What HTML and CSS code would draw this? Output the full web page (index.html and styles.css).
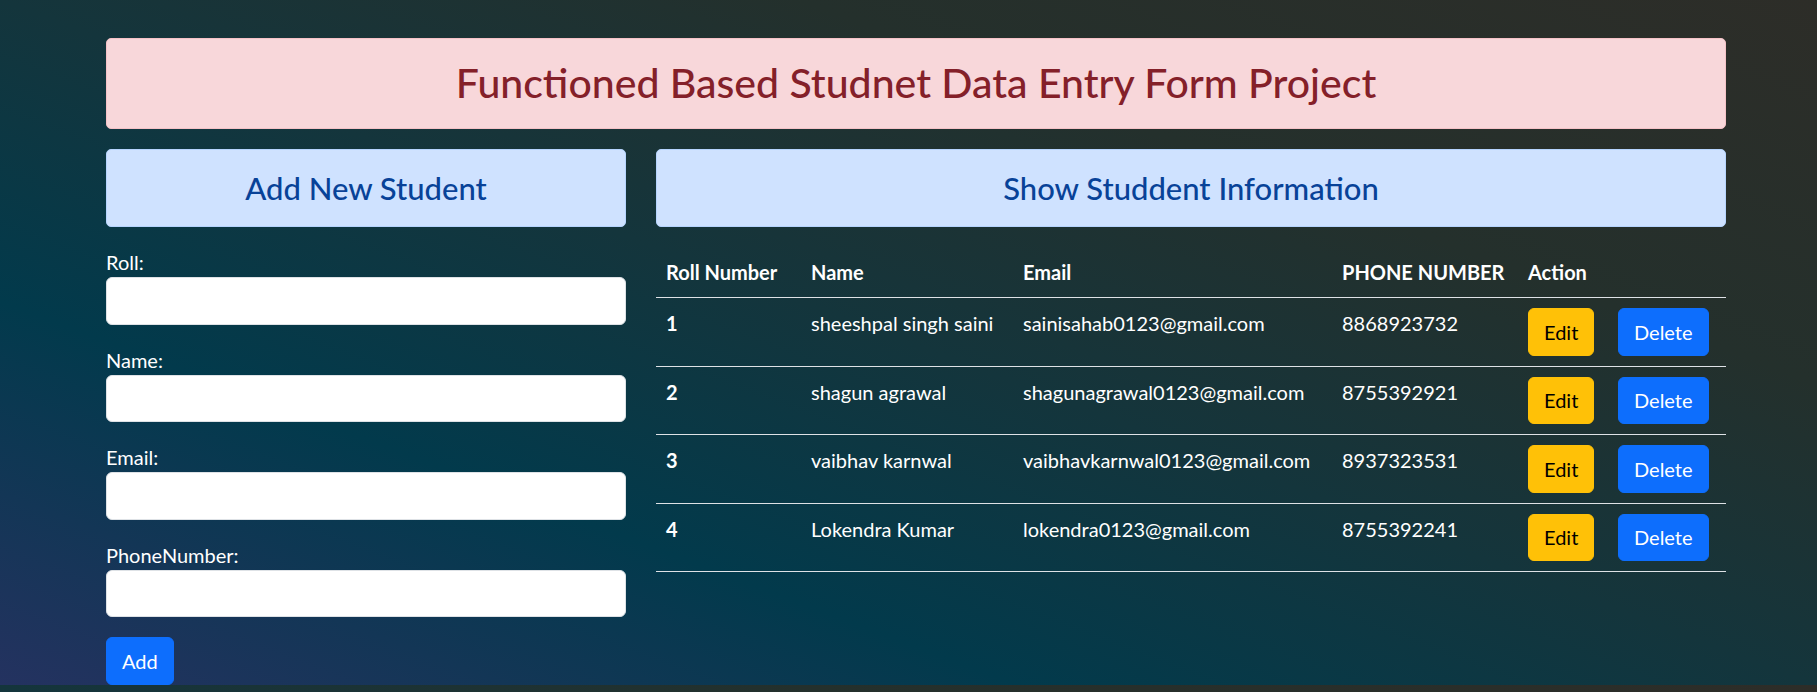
FILE: index.html
```html
<!DOCTYPE html>
<html lang="en">
<head>
<meta charset="utf-8">
<title>Student Data Entry</title>
<link rel="stylesheet" href="styles.css">
</head>
<body>
<div class="container">
  <div class="alert alert-danger title-box">
    <h2 class="title">Functioned Based Studnet Data Entry Form Project</h2>
  </div>
  <div class="row">
    <div class="col-form">
      <div class="alert alert-primary sub-box">
        <h4 class="sub-title">Add New Student</h4>
      </div>
      <form class="form">
        <div class="field">
          <label class="label" for="roll">Roll:</label>
          <input class="form-control" id="roll" type="text">
        </div>
        <div class="field">
          <label class="label" for="name">Name:</label>
          <input class="form-control" id="name" type="text">
        </div>
        <div class="field">
          <label class="label" for="email">Email:</label>
          <input class="form-control" id="email" type="email">
        </div>
        <div class="field">
          <label class="label" for="phone">PhoneNumber:</label>
          <input class="form-control" id="phone" type="text">
        </div>
        <button class="btn btn-primary" type="button">Add</button>
      </form>
    </div>
    <div class="col-table">
      <div class="alert alert-primary sub-box">
        <h4 class="sub-title">Show Studdent Information</h4>
      </div>
      <table class="table">
        <colgroup>
          <col class="c-roll">
          <col class="c-name">
          <col class="c-email">
          <col class="c-phone">
          <col class="c-edit">
          <col class="c-del">
        </colgroup>
        <thead>
          <tr>
            <th>Roll Number</th>
            <th>Name</th>
            <th>Email</th>
            <th>PHONE NUMBER</th>
            <th colspan="2">Action</th>
          </tr>
        </thead>
        <tbody>
          <tr>
            <th>1</th>
            <td>sheeshpal singh saini</td>
            <td>sainisahab0123@gmail.com</td>
            <td>8868923732</td>
            <td><button class="btn btn-warning" type="button">Edit</button></td>
            <td><button class="btn btn-primary" type="button">Delete</button></td>
          </tr>
          <tr>
            <th>2</th>
            <td>shagun agrawal</td>
            <td>shagunagrawal0123@gmail.com</td>
            <td>8755392921</td>
            <td><button class="btn btn-warning" type="button">Edit</button></td>
            <td><button class="btn btn-primary" type="button">Delete</button></td>
          </tr>
          <tr>
            <th>3</th>
            <td>vaibhav karnwal</td>
            <td>vaibhavkarnwal0123@gmail.com</td>
            <td>8937323531</td>
            <td><button class="btn btn-warning" type="button">Edit</button></td>
            <td><button class="btn btn-primary" type="button">Delete</button></td>
          </tr>
          <tr>
            <th>4</th>
            <td>Lokendra Kumar</td>
            <td>lokendra0123@gmail.com</td>
            <td>8755392241</td>
            <td><button class="btn btn-warning" type="button">Edit</button></td>
            <td><button class="btn btn-primary" type="button">Delete</button></td>
          </tr>
        </tbody>
      </table>
    </div>
  </div>
</div>
</body>
</html>
```
FILE: styles.css
```css
html {
  margin: 0;
}

body {
  margin: 0;
  font-family: Lato, "Open Sans", "Liberation Sans", sans-serif;
  font-size: 20px;
  line-height: 1.5;
  color: #ffffff;
  background: linear-gradient(to top right, #243260 0%, #023a4c 28%, #14353c 50%, #24302c 72%, #2d2d28 100%);
}

.container {
  width: 1620px;
  margin-left: 106px;
  padding-top: 38px;
}

.alert {
  border: 1px solid transparent;
  border-radius: 5px;
  padding: 20px;
  margin-bottom: 20px;
  text-align: center;
}

.alert-danger {
  background: #f8d7da;
  border-color: #f5c2c7;
  color: #842029;
}

.alert-primary {
  background: #cfe2ff;
  border-color: #b6d4fe;
  color: #084298;
}

.title-box {
  padding: 20.25px 20px;
}

.title {
  margin: 0;
  font-size: 41px;
  line-height: 48px;
  font-weight: 500;
}

.sub-box {
  padding: 20.25px 20px;
}

.sub-title {
  margin: 0;
  font-size: 31px;
  line-height: 36px;
  font-weight: 500;
}

.row {
  display: flex;
  gap: 30px;
  align-items: flex-start;
}

.col-form {
  width: 520px;
  flex: none;
}

.col-table {
  width: 1070px;
  flex: none;
}

.form {
  margin: 0;
}

.field {
  margin-bottom: 20px;
}

.label {
  display: block;
  height: 30px;
  line-height: 30px;
}

.form-control {
  display: block;
  box-sizing: border-box;
  width: 100%;
  height: 47.5px;
  margin: 0;
  padding: 7.5px 15px;
  font: inherit;
  border: 1px solid #dee2e6;
  border-radius: 6px;
  background: #ffffff;
  color: #212529;
}

.btn {
  display: inline-block;
  box-sizing: border-box;
  height: 47.5px;
  margin: 0;
  padding: 7.5px 15px;
  font-family: inherit;
  font-size: 20px;
  line-height: 30px;
  font-weight: 400;
  border: 1px solid transparent;
  border-radius: 6px;
  cursor: pointer;
  vertical-align: top;
}

.btn-primary {
  background: #0d6efd;
  border-color: #0d6efd;
  color: #ffffff;
}

.btn-warning {
  background: #ffc107;
  border-color: #ffc107;
  color: #000000;
}

.table {
  width: 100%;
  border-collapse: collapse;
  table-layout: fixed;
  margin: 0;
  color: #ffffff;
}

.c-roll { width: 145px; }
.c-name { width: 212px; }
.c-email { width: 319px; }
.c-phone { width: 186px; }
.c-edit { width: 90px; }
.c-del { width: 118px; }

.table th,
.table td {
  padding: 10px;
  text-align: left;
  vertical-align: top;
  border-bottom: 1px solid #dee2e6;
  white-space: nowrap;
}

.table th {
  font-weight: 700;
}
```
